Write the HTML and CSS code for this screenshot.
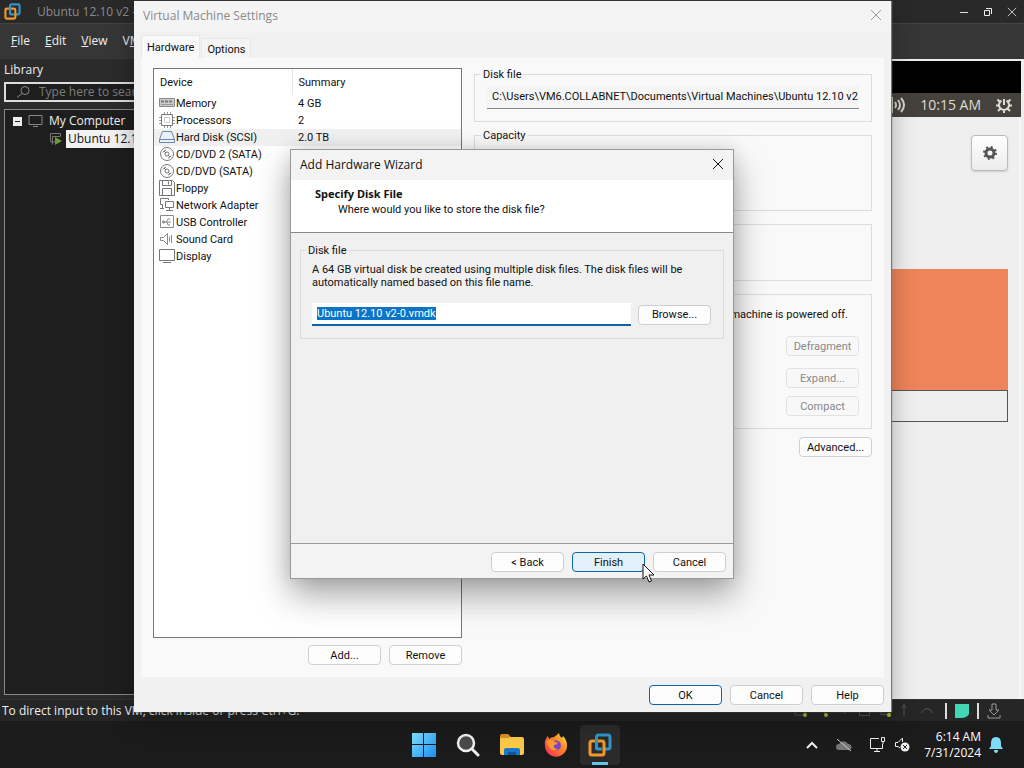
FILE: index.html
```html
<!DOCTYPE html>
<html lang="en">
<head>
    <meta charset="UTF-8">
    <meta name="viewport" content="width=device-width, initial-scale=1.0">
    <title>Virtual Machine Settings</title>
    <link rel="stylesheet" href="styles.css">
</head>
<body>
    <svg class="defs" width="0" height="0" aria-hidden="true">
        <symbol id="vmware" viewBox="0 0 24 24">
            <g fill="none" stroke-width="3" stroke-linejoin="round">
                <path stroke="#2f95c8" d="M8.500 15V4a2 2 0 0 1 2-2H20a2 2 0 0 1 2 2v10a2 2 0 0 1-2 2h-3"/>
                <rect stroke="#f0982c" x="2" y="8" width="14" height="14" rx="2"/>
                <path stroke="#2f95c8" d="M8.500 6v9a1 1 0 0 0 1 1H14"/>
            </g>
        </symbol>
        <symbol id="close" viewBox="0 0 12 12">
            <path d="M1 1l10 10M11 1L1 11" fill="none" stroke="currentColor"/>
        </symbol>
        <symbol id="disc" viewBox="0 0 16 16">
            <g fill="none" stroke="#777">
                <circle cx="8" cy="8" r="6.500"/>
                <circle cx="8" cy="8" r="2"/>
                <path d="M4 6.500Q5 4.500 7 4M12 9.500Q11 11.500 9 12M5 5l2 2M9 9l2 2"/>
            </g>
        </symbol>
    </svg>

    <main class="app">
        <header class="titlebar">
            <svg class="logo"><use href="#vmware"/></svg>
            <span class="app-title">Ubuntu 12.10 v2 -</span>
            <div class="window-controls">
                <button aria-label="Minimize"><svg width="10" height="10"><path d="M1 5.500h8" stroke="#ddd"/></svg></button>
                <button aria-label="Restore"><svg width="10" height="10"><path d="M3 1.500h5.500V7M1.500 3.500h5v5h-5z" fill="none" stroke="#eee"/></svg></button>
                <button aria-label="Close"><svg width="10" height="10" viewBox="0 0 12 12" color="#ddd"><use href="#close"/></svg></button>
            </div>
        </header>
        <nav class="menubar">
            <a href="#"><u>F</u>ile</a>
            <a href="#"><u>E</u>dit</a>
            <a href="#"><u>V</u>iew</a>
            <a href="#">V<u>M</u></a>
        </nav>

        <div class="workspace">
            <aside class="library">
                <h2>Library</h2>
                <label class="search">
                    <svg width="15" height="14" viewBox="0 0 15 14"><circle cx="9" cy="5.500" r="4" fill="none" stroke="#888"/><path d="M6 8.500L1 12.500" stroke="#888"/></svg>
                    <input type="text" placeholder="Type here to search" aria-label="Search library">
                </label>
                <ul class="tree">
                    <li>
                        <svg width="9" height="9"><rect width="9" height="9" fill="#eee"/><path d="M2 4.500h5" stroke="#222"/></svg>
                        <svg class="computer" width="15" height="12"><path d="M1 .5h13v9H1zM5 11.500h5" fill="none" stroke="#888"/></svg>
                        My Computer
                    </li>
                    <li class="vm">
                        <svg width="15" height="14"><path d="M11 10H2.500V1.500h10V4M4.500 12.500v-8h8" fill="none" stroke="#777"/><path d="M7 5l7 4-7 4z" fill="#6d9c2e"/></svg>
                        <span class="vm-name">Ubuntu 12.10 v2</span>
                    </li>
                </ul>
            </aside>

            <section class="guest">
                <div class="guest-blank"></div>
                <div class="guest-panel">
                    <svg width="18" height="16"><path d="M0 4v8l4 3V1zM7 5q2 3 0 6M10 3q4 5 0 10M13 1q6 7 0 14" fill="none" stroke="#d8d3ca" stroke-width="2"/></svg>
                    <span>10:15 AM</span>
                    <svg width="18" height="18" viewBox="0 0 18 18"><g fill="none" stroke="#dfdbd2" stroke-width="2"><path d="M6.500 4.600a5 5 0 1 0 5 0M9 3v6M9 14v3M4.500 5.500L2.500 3.500M13.500 5.500L15.500 3.500M4 9.500H1M14 9.500h3M5.500 12.500L3 15M12.500 12.500L15 15"/></g></svg>
                </div>
                <div class="guest-screen">
                    <button class="gear" aria-label="Options">
                        <svg width="18" height="18" viewBox="0 0 18 18"><circle cx="9" cy="9" r="4" fill="none" stroke="#555" stroke-width="3"/><circle cx="9" cy="9" r="6" fill="none" stroke="#555" stroke-width="2" stroke-dasharray="2 2.712"/></svg>
                    </button>
                    <div class="login-card"></div>
                    <div class="login-row"></div>
                </div>
            </section>
        </div>

        <footer class="statusbar">
            <span>To direct input to this VM, click inside or press Ctrl+G.</span>
            <svg class="device-lights" width="145" height="16" viewBox="0 0 145 16">
                <g fill="none" stroke="#555"><path d="M3 12V6h10v6zM25 9l5-3 5 7M46 7q6-3 7 4M67.500 2.500h10v10h-10zM89 4.500h9v7h-9zM112 1v12M109 5l3-3 3 3M129 10q6-9 12 0"/></g>
                <g fill="#a3c12f"><circle cx="13" cy="12" r="2"/><circle cx="34" cy="12" r="2"/><circle cx="97" cy="12" r="2"/></g>
            </svg>
            <i class="bar"></i>
            <svg width="14" height="14"><path d="M0 0h14v10q-2 4-8 4H0z" fill="#43d6b5"/></svg>
            <i class="bar"></i>
            <svg width="14" height="16"><path d="M5 1h4v6h3L7 12 2 7h3zM1 12v3h12v-3" fill="none" stroke="#999"/></svg>
        </footer>
    </main>

    <section class="settings" role="dialog" aria-labelledby="settingsTitle">
        <header class="settings-title">
            <h1 id="settingsTitle">Virtual Machine Settings</h1>
            <button class="close-btn muted" aria-label="Close"><svg width="12" height="12"><use href="#close"/></svg></button>
        </header>
        <div class="tabs" role="tablist">
            <button class="tab active" role="tab" aria-selected="true">Hardware</button>
            <button class="tab" role="tab" aria-selected="false">Options</button>
        </div>
        <div class="tab-page">
            <div class="devices">
                <div class="device-list">
                    <table>
                        <thead>
                            <tr><th>Device</th><th>Summary</th></tr>
                        </thead>
                        <tbody>
                            <tr>
                                <td><svg class="icon" viewBox="0 0 16 16"><path d="M.5 3.500h15v8H.5z" fill="#ccc" stroke="#888"/><path d="M2 6.500h12" stroke="#777" stroke-width="2" stroke-dasharray="3 1"/><path d="M2 9.500h12" stroke="#999"/></svg>Memory</td>
                                <td>4 GB</td>
                            </tr>
                            <tr>
                                <td><svg class="icon" viewBox="0 0 16 16"><path d="M5.500 0v3M8.500 0v3M11.500 0v3M5.500 13v3M8.500 13v3M11.500 13v3M0 5.500h3M0 8.500h3M0 11.500h3M13 5.500h3M13 8.500h3M13 11.500h3" stroke="#999"/><path d="M2.500 2.500h11v11h-11z" fill="#fff" stroke="#777"/><path d="M5.500 5.500h5v5h-5z" fill="none" stroke="#ccc"/></svg>Processors</td>
                                <td>2</td>
                            </tr>
                            <tr class="selected">
                                <td><svg class="icon" viewBox="0 0 16 16"><path d="M3.500 2.500h9l3 8v3H.5v-3zM.5 10.500h15" fill="#e9f1fa" stroke="#6a87a8"/></svg>Hard Disk (SCSI)</td>
                                <td>2.0 TB</td>
                            </tr>
                            <tr>
                                <td><svg class="icon"><use href="#disc"/></svg>CD/DVD 2 (SATA)</td>
                                <td></td>
                            </tr>
                            <tr>
                                <td><svg class="icon"><use href="#disc"/></svg>CD/DVD (SATA)</td>
                                <td></td>
                            </tr>
                            <tr>
                                <td><svg class="icon" viewBox="0 0 16 16"><path d="M.5.5h13l2 2v13H.5zM3.500.5v5h9v-5M9.500 1.500v3M3.500 15.500v-7h9v7M3.500 15.500h9" fill="none" stroke="#777"/></svg>Floppy</td>
                                <td></td>
                            </tr>
                            <tr>
                                <td><svg class="icon" viewBox="0 0 16 16"><path d="M4 7.500H1.500v-6h8V3M6.500 4.500h8v6h-8zM10.500 10.500v3M7 13.500h7M3.500 7.500v4M1 11.500h4" fill="none" stroke="#777"/></svg>Network Adapter</td>
                                <td></td>
                            </tr>
                            <tr>
                                <td><svg class="icon" viewBox="0 0 16 16"><path d="M1.500 1.500h13v12h-13zM4 8h8M7 8l2-3h2M8 8l1 3h2" fill="none" stroke="#888"/><circle cx="4.500" cy="8" r="1.500" fill="#888"/></svg>USB Controller</td>
                                <td></td>
                            </tr>
                            <tr>
                                <td><svg class="icon" viewBox="0 0 16 16"><path d="M1.500 6.500h3l4-4v11l-4-4h-3zM10.500 5.500v5M12.500 4v8" fill="none" stroke="#888"/></svg>Sound Card</td>
                                <td></td>
                            </tr>
                            <tr>
                                <td><svg class="icon" viewBox="0 0 16 16"><path d="M.5 1.500h15v11H.5zM4 14.500h8" fill="none" stroke="#777"/></svg>Display</td>
                                <td></td>
                            </tr>
                        </tbody>
                    </table>
                </div>
                <div class="buttons">
                    <button class="btn">Add...</button>
                    <button class="btn">Remove</button>
                </div>
            </div>

            <div class="details">
                <fieldset class="group">
                    <legend>Disk file</legend>
                    <div class="path-box">
                        <input class="path" type="text" aria-label="Disk file" readonly value="C:\Users\VM6.COLLABNET\Documents\Virtual Machines\Ubuntu 12.10 v2\Ubuntu">
                    </div>
                </fieldset>
                <fieldset class="group capacity">
                    <legend>Capacity</legend>
                </fieldset>
                <div class="group information"></div>
                <div class="group utilities">
                    <p>machine is powered off.</p>
                    <button class="btn" disabled>Defragment</button>
                    <button class="btn" disabled>Expand...</button>
                    <button class="btn" disabled>Compact</button>
                </div>
                <button class="btn advanced">Advanced...</button>
            </div>
        </div>
        <footer class="settings-footer">
            <button class="btn default">OK</button>
            <button class="btn">Cancel</button>
            <button class="btn">Help</button>
        </footer>
    </section>

    <section class="wizard" role="dialog" aria-labelledby="wizardTitle">
        <header class="wizard-title">
            <h1 id="wizardTitle">Add Hardware Wizard</h1>
            <button class="close-btn" aria-label="Close"><svg width="12" height="12"><use href="#close"/></svg></button>
        </header>
        <div class="wizard-head">
            <h2>Specify Disk File</h2>
            <p>Where would you like to store the disk file?</p>
        </div>
        <div class="wizard-body">
            <fieldset class="group">
                <legend>Disk file</legend>
                <p>A 64 GB virtual disk be created using multiple disk files. The disk files will be automatically named based on this file name.</p>
                <div class="file-row">
                    <input type="text" id="diskFile" aria-label="Disk file name" value="Ubuntu 12.10 v2-0.vmdk">
                    <button class="btn">Browse...</button>
                </div>
            </fieldset>
        </div>
        <footer class="wizard-footer">
            <button class="btn">&lt; Back</button>
            <button class="btn default hot">Finish</button>
            <button class="btn">Cancel</button>
        </footer>
        <svg class="cursor" width="13" height="20" viewBox="0 0 13 20"><path d="M1 1v15l3.500-3 2.500 6 2.500-1-2.500-6H12z" fill="#fff" stroke="#111"/></svg>
    </section>

    <footer class="taskbar">
        <nav class="pinned">
            <button aria-label="Start">
                <svg width="24" height="24"><defs><linearGradient id="win" x2="1" y2="1"><stop offset="0" stop-color="#7fe3ff"/><stop offset="1" stop-color="#1a8cf0"/></linearGradient></defs><path d="M0 0h11v11H0zM12 0h12v11H12zM0 12h11v12H0zM12 12h12v12H12z" fill="url(#win)"/></svg>
            </button>
            <button aria-label="Search">
                <svg width="24" height="24"><circle cx="10" cy="10" r="8" fill="#4a4a4a" stroke="#eee" stroke-width="2.500"/><path d="M16 16l6 6" stroke="#eee" stroke-width="3" stroke-linecap="round"/></svg>
            </button>
            <button aria-label="File Explorer">
                <svg width="26" height="24"><path d="M1 3q0-2 2-2h6l3 3v4H1z" fill="#d9941e"/><path d="M1 5h8l3-1h11q2 0 2 2v14q0 2-2 2H3q-2 0-2-2z" fill="#fbc947"/><path d="M5 22v-5q0-2 2-2h12q2 0 2 2v5z" fill="#1878c8"/><path d="M9 22v-3h8v3z" fill="#0d569e"/></svg>
            </button>
            <button aria-label="Firefox">
                <svg width="24" height="24"><defs><linearGradient id="fox" x1="1" y1="0" x2="0" y2="1"><stop offset="0" stop-color="#fff04a"/><stop offset=".4" stop-color="#ff8a22"/><stop offset="1" stop-color="#ef2464"/></linearGradient></defs><path d="M15 0q0 3 3 5l1-2q4 4 4 9.500A11 11 0 0 1 1 13Q0 7 4 3l1 3q2-2 5-2 3-2 5-4z" fill="url(#fox)"/><circle cx="12" cy="12.500" r="5" fill="#7c45c8"/><path d="M3 8q5-3 8 1l3 1q-1 2-4 2-1 4 4 4-5 3-8-1Q3 13 3 8z" fill="#ff9a2c"/></svg>
            </button>
            <button class="running" aria-label="VMware Workstation">
                <svg width="24" height="24"><use href="#vmware"/></svg>
            </button>
        </nav>
        <div class="tray">
            <svg width="12" height="8"><path d="M1 7l5-5 5 5" fill="none" stroke="#eee" stroke-width="2"/></svg>
            <svg class="cloud" width="18" height="14"><path d="M4 12a3 3 0 0 1 0-6 5 5 0 0 1 9 0 3 3 0 0 1 1 6z" fill="#777"/><path d="M2 1l14 12" stroke="#ccc"/></svg>
            <svg class="network" width="17" height="17"><path d="M10 2.500H1.500v10h12V8M5 15.500h6M8 13v2M12.500 1.500h3v4h-3zM14 6v2" fill="none" stroke="#eee"/></svg>
            <svg width="16" height="16"><path d="M6 11L4 9.500H1.500v-4H4L8.500 1v4" fill="none" stroke="#eee"/><circle cx="11" cy="10" r="4.500" fill="#eee"/><path d="M9 8l4 4M13 8l-4 4" stroke="#222"/></svg>
            <div class="clock">
                <time>6:14 AM</time>
                <time>7/31/2024</time>
            </div>
            <svg width="14" height="16"><path d="M7 0q5 0 5 6v3l2 3H0l2-3V6q0-6 5-6zM5 13h4q0 3-2 3t-2-3z" fill="#7edcf5"/></svg>
        </div>
    </footer>

    <script>
        const diskFile = document.getElementById('diskFile');
        diskFile.focus();
        diskFile.select();
    </script>
</body>
</html>
```
FILE: styles.css
```css
:root {
    --accent: #0f64a8;
    --line: #dcdcdc;
    --dark: #1e1e1e;
    --ui-font: Tahoma, Roboto, "Noto Sans", sans-serif;
    --title-font: "Segoe UI", "Open Sans", "Noto Sans", sans-serif;
}

* {
    box-sizing: border-box;
}

body {
    display: flex;
    flex-direction: column;
    height: 100vh;
    margin: 0;
    overflow: hidden;
    font-family: var(--ui-font);
    font-size: 11px;
    line-height: 13px;
    color: #111;
    background: #1a1a1a;
}

h1, h2, p, ul {
    margin: 0;
    padding: 0;
    font-size: inherit;
    font-weight: normal;
}

button, input {
    font: inherit;
    color: inherit;
}

svg {
    flex: none;
}

.defs {
    position: absolute;
}

/* Main window */
.app {
    flex: 1;
    min-height: 0;
    display: flex;
    flex-direction: column;
    font-family: var(--title-font);
    font-size: 12px;
    line-height: 16px;
    color: #eee;
    background: #2b2b2b;
}

.titlebar {
    display: flex;
    align-items: center;
    gap: 16px;
    height: 24px;
    padding: 0 7px 0 4px;
    background: #292929;
    color: #8a8a8a;
    border-bottom: 1px solid #444;
}

.logo {
    width: 17px;
    height: 17px;
}

.window-controls {
    display: flex;
    gap: 14px;
    margin-left: auto;
}

.window-controls button {
    display: flex;
    padding: 0;
    border: 0;
    background: none;
}

.menubar {
    display: flex;
    align-items: center;
    gap: 15px;
    height: 35px;
    padding: 0 11px 2px;
    background: #363636;
}

.menubar a {
    color: inherit;
    text-decoration: none;
}

.workspace {
    flex: 1;
    min-height: 0;
    display: flex;
}

.library {
    display: flex;
    flex-direction: column;
    width: 240px;
    padding: 3px 0 4px 4px;
}

.search {
    display: flex;
    align-items: center;
    gap: 8px;
    height: 20px;
    margin-top: 4px;
    padding: 0 10px;
    border: 2px solid #ddd;
    background: var(--dark);
}

.search input {
    width: 140px;
    padding: 0;
    border: 0;
    background: none;
}

.search input::placeholder {
    color: #7c7c7c;
}

.tree {
    flex: 1;
    margin-top: 7px;
    padding-top: 2px;
    border: 1px solid #888;
    background: var(--dark);
    list-style: none;
}

.tree li {
    display: flex;
    align-items: center;
    gap: 6px;
    height: 18px;
    padding-left: 8px;
}

.tree .vm {
    gap: 3px;
    padding-left: 43px;
}

.tree .vm-name {
    padding: 0 2px;
    line-height: 18px;
    color: #111;
    background: #f2f2f2;
}

.guest {
    flex: 1;
    display: flex;
    flex-direction: column;
    padding-right: 3px;
    border-top: 2px solid #eee;
    background: #efefef;
}

.guest-blank {
    height: 32px;
    background: #000;
}

.guest-panel {
    display: flex;
    align-items: center;
    justify-content: flex-end;
    gap: 14px;
    height: 24px;
    padding-right: 8px;
    font-size: 14px;
    color: #dfdbd2;
    background: #45423d;
}

.guest-screen {
    flex: 1;
    padding: 18px 11px 0 0;
    border-right: 2px solid #f8f8f8;
}

.gear {
    display: flex;
    align-items: center;
    justify-content: center;
    width: 37px;
    height: 36px;
    margin-left: auto;
    border: 1px solid #bbb;
    border-radius: 4px;
    background: linear-gradient(#fff, #ececec);
    box-shadow: 0 1px 2px #ccc;
}

.login-card {
    height: 121px;
    margin-top: 98px;
    background: #ef845a;
}

.login-row {
    height: 32px;
    border: 1px solid #555;
}

.statusbar {
    display: flex;
    align-items: center;
    gap: 8px;
    height: 22px;
    padding: 0 23px 0 2px;
    border-top: 1px solid #333;
    background: #262626;
}

.device-lights {
    margin-left: auto;
}

.statusbar .bar {
    width: 2px;
    height: 16px;
    background: #ddd;
}

/* Shared dialog parts */
.btn {
    width: 73px;
    height: 20px;
    padding: 0;
    border: 1px solid #cfcfcf;
    border-radius: 4px;
    background: #fdfdfd;
}

.btn.default {
    border-color: var(--accent);
}

.btn.hot {
    background: #e2f0fa;
}

.btn:disabled {
    color: #888;
    border-color: #e2e2e2;
    background: #f8f8f8;
}

.close-btn {
    display: flex;
    padding: 0;
    border: 0;
    background: none;
}

.close-btn.muted {
    color: #999;
}

.group {
    min-width: 0;
    margin: 0;
    padding: 0 12px;
    border: 1px solid var(--line);
}

.group legend {
    margin-left: -6px;
    padding: 0 2px;
}

/* Virtual Machine Settings */
.settings {
    position: absolute;
    top: 1px;
    right: 133px;
    bottom: 56px;
    left: 134px;
    display: flex;
    flex-direction: column;
    background: #f1f1f1;
    box-shadow: 1px 0 1px #777, 0 8px 24px rgba(0, 0, 0, 0.3);
}

.settings-title {
    display: flex;
    align-items: center;
    justify-content: space-between;
    height: 30px;
    padding: 0 9px 2px;
    font-family: var(--title-font);
    font-size: 12px;
    color: #8a8a8a;
    background: #f4f4f4;
}

.tabs {
    display: flex;
    align-items: flex-end;
    gap: 1px;
    height: 27px;
    padding: 0 7px;
}

.tab {
    height: 20px;
    padding: 2px 5px 0;
    border: 1px solid #e8e8e8;
    border-bottom: 0;
    background: #f4f4f4;
}

.tab.active {
    height: 23px;
    padding-bottom: 2px;
    background: #f9f9f9;
}

.tab-page {
    flex: 1;
    min-height: 0;
    display: flex;
    gap: 12px;
    margin: 0 7px;
    padding: 10px 12px 12px;
    background: #f9f9f9;
}

.devices {
    display: flex;
    flex-direction: column;
    width: 309px;
}

.device-list {
    flex: 1;
    border: 1px solid #777;
    background: #fff;
}

.device-list table {
    width: 100%;
    border-collapse: collapse;
    table-layout: fixed;
}

.device-list th {
    height: 26px;
    padding: 0 6px;
    font-weight: normal;
    text-align: left;
}

.device-list th:first-child {
    width: 138px;
    border-right: 1px solid #e5e5e5;
}

.device-list td {
    height: 17px;
    padding: 0 5px;
    line-height: 17px;
    white-space: nowrap;
}

.device-list td + td {
    padding-left: 6px;
}

.device-list .selected {
    background: #f0f0f0;
}

.icon {
    width: 16px;
    height: 16px;
    margin-right: 1px;
    vertical-align: top;
}

.buttons {
    display: flex;
    justify-content: flex-end;
    gap: 8px;
    margin-top: 7px;
}

.details {
    flex: 1;
    min-width: 0;
    display: flex;
    flex-direction: column;
}

.path-box {
    margin: 4px 0 12px;
    padding: 0 1px 0 5px;
    border-bottom: 1px solid #888;
    background: #f5f5f5;
}

.path {
    display: block;
    width: 100%;
    height: 23px;
    padding: 0;
    border: 0;
    background: none;
}

.capacity {
    height: 82px;
    margin-top: 7px;
}

.information {
    height: 57px;
    margin-top: 13px;
}

.utilities {
    display: flex;
    flex-direction: column;
    align-items: flex-end;
    gap: 8px;
    height: 135px;
    margin-top: 13px;
    padding: 13px 12px 0;
}

.utilities p {
    margin: 0 11px 7px 0;
}

.utilities .btn:nth-of-type(2) {
    margin-top: 4px;
}

.advanced {
    align-self: flex-end;
    margin-top: 8px;
}

.settings-footer {
    display: flex;
    justify-content: flex-end;
    gap: 8px;
    padding: 8px 7px 7px;
}

/* Add Hardware Wizard */
.wizard {
    position: absolute;
    top: 149px;
    right: 290px;
    bottom: 189px;
    left: 290px;
    display: flex;
    flex-direction: column;
    border: 1px solid #999;
    background: #f0f0f0;
    box-shadow: 0 16px 32px rgba(0, 0, 0, 0.35), 0 0 16px rgba(0, 0, 0, 0.1);
}

.wizard-title {
    display: flex;
    align-items: center;
    justify-content: space-between;
    height: 30px;
    padding: 0 9px 2px;
    font-family: var(--title-font);
    font-size: 12px;
    background: #f3f3f3;
}

.wizard-head {
    height: 53px;
    padding: 6px 24px;
    line-height: 16px;
    border-bottom: 1px solid #888;
    background: #fff;
}

.wizard-head h2 {
    font-family: "Noto Sans", sans-serif;
    font-weight: bold;
}

.wizard-head p {
    padding-left: 23px;
}

.wizard-body {
    flex: 1;
    padding: 11px 9px;
}

.wizard-body .group {
    padding: 0 12px 12px 11px;
}

.wizard-body p {
    margin-top: 6px;
}

.file-row {
    display: flex;
    align-items: center;
    gap: 7px;
    margin-top: 14px;
}

.file-row input {
    flex: 1;
    min-width: 0;
    height: 23px;
    padding: 0 5px;
    border: 0;
    border-bottom: 2px solid var(--accent);
    outline: none;
    background: #fff;
}

.file-row input::selection {
    color: #fff;
    background: #0a74c8;
}

.wizard-footer {
    display: flex;
    justify-content: flex-end;
    gap: 8px;
    padding: 8px 7px 6px;
    border-top: 1px solid #999;
    background: #f3f3f3;
}

.cursor {
    position: absolute;
    right: 78px;
    bottom: -5px;
}

/* Taskbar */
.taskbar {
    display: grid;
    grid-template-columns: 1fr auto 1fr;
    align-items: center;
    height: 47px;
    font-family: var(--title-font);
    font-size: 12px;
    line-height: 16px;
    color: #fff;
    background: #1b1b1b;
}

.pinned {
    grid-column: 2;
    display: flex;
    gap: 4px;
}

.pinned button {
    display: flex;
    align-items: center;
    justify-content: center;
    width: 40px;
    height: 40px;
    padding: 0;
    border: 0;
    border-radius: 4px;
    background: none;
}

.pinned .running {
    background: linear-gradient(#62c5e8, #62c5e8) center bottom / 16px 3px no-repeat #2b2b2b;
}

.tray {
    display: flex;
    align-items: center;
    justify-content: flex-end;
    gap: 8px;
    padding-right: 21px;
}

.tray .cloud {
    margin: 0 8px 0 9px;
}

.clock {
    display: flex;
    flex-direction: column;
    margin-left: 6px;
    text-align: right;
}
```
